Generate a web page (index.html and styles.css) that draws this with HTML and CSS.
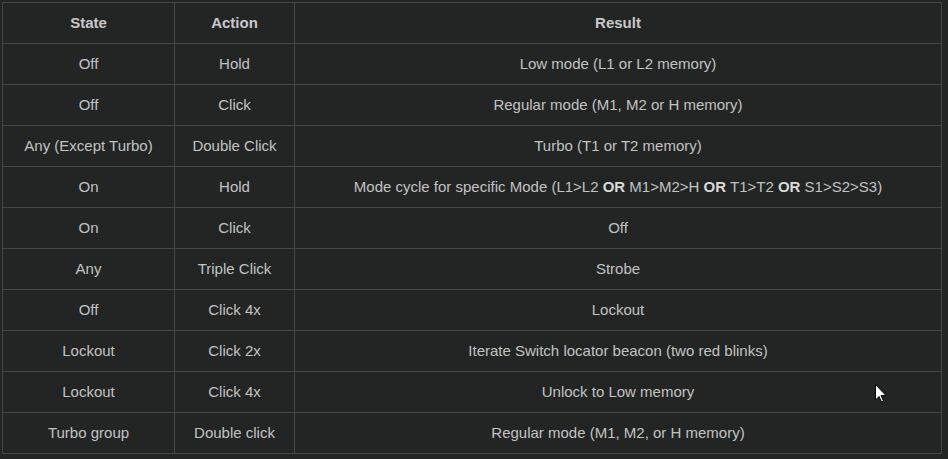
FILE: index.html
```html
<!DOCTYPE html>
<html>
<head>
<meta charset="utf-8">
<link rel="stylesheet" href="styles.css">
</head>
<body>
<table class="tbl">
  <thead>
    <tr><th class="c1">State</th><th class="c2">Action</th><th>Result</th></tr>
  </thead>
  <tbody>
    <tr><td>Off</td><td>Hold</td><td>Low mode (L1 or L2 memory)</td></tr>
    <tr><td>Off</td><td>Click</td><td>Regular mode (M1, M2 or H memory)</td></tr>
    <tr><td>Any (Except Turbo)</td><td>Double Click</td><td>Turbo (T1 or T2 memory)</td></tr>
    <tr><td>On</td><td>Hold</td><td>Mode cycle for specific Mode (L1&gt;L2 <b>OR</b> M1&gt;M2&gt;H <b>OR</b> T1&gt;T2 <b>OR</b> S1&gt;S2&gt;S3)</td></tr>
    <tr><td>On</td><td>Click</td><td>Off</td></tr>
    <tr><td>Any</td><td>Triple Click</td><td>Strobe</td></tr>
    <tr><td>Off</td><td>Click 4x</td><td>Lockout</td></tr>
    <tr><td>Lockout</td><td>Click 2x</td><td>Iterate Switch locator beacon (two red blinks)</td></tr>
    <tr><td>Lockout</td><td>Click 4x</td><td>Unlock to Low memory</td></tr>
    <tr><td>Turbo group</td><td>Double click</td><td>Regular mode (M1, M2, or H memory)</td></tr>
  </tbody>
</table>
<svg class="cursor" width="12" height="19" viewBox="0 0 12 19">
  <path d="M0.5 0.5 L0.5 16 L4 12.5 L6.5 18 L8.5 17 L6 11.5 L11 11.5 Z" fill="#fff" stroke="#000" stroke-width="1"/>
</svg>
</body>
</html>
```
FILE: styles.css
```css
html, body {
  margin: 0;
  padding: 0;
  background: #232525;
}
body {
  padding: 2px;
  font-family: "Liberation Sans", Arial, sans-serif;
  font-size: 15px;
  color: #c2c2c2;
}
.tbl {
  border-collapse: collapse;
  width: 940px;
}
.tbl th, .tbl td {
  border: 1px solid #464646;
  height: 40px;
  padding: 0 8px 2px;
  text-align: center;
  vertical-align: middle;
  box-sizing: border-box;
}
.tbl tr {
  height: 41px;
}
.tbl th {
  font-weight: bold;
  color: #c8c8c8;
}
.tbl .c1 { width: 172px; }
.tbl .c2 { width: 120px; }
.tbl b { color: #d8d8d8; }
.cursor {
  position: absolute;
  left: 875px;
  top: 384px;
}
```
